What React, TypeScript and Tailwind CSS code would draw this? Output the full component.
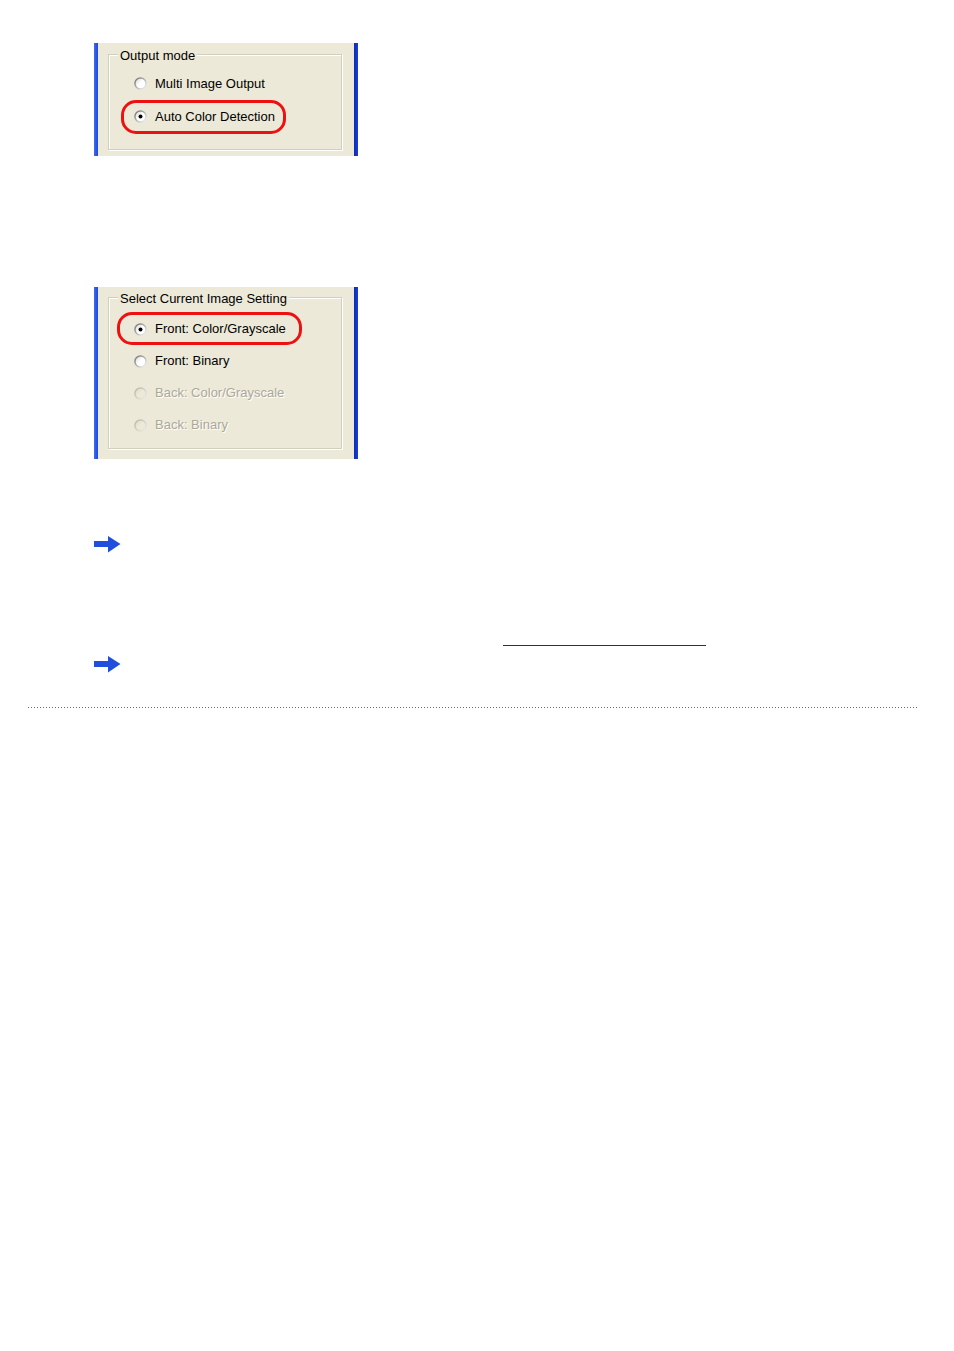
import React from "react";

const font = { fontFamily: '"Liberation Sans", Arial, sans-serif' };

function Radio({ checked, disabled, id }: { checked?: boolean; disabled?: boolean; id: string }) {
  return (
    <svg width="13" height="13" viewBox="0 0 13 13" className="shrink-0">
      <defs>
        <linearGradient id={`o${id}`} x1="0" y1="0" x2="1" y2="1">
          <stop offset="0" stopColor={disabled ? "#b4b2a4" : "#666666"} />
          <stop offset="0.5" stopColor={disabled ? "#d2d0c2" : "#b4b4b4"} />
          <stop offset="1" stopColor={disabled ? "#f4f2e8" : "#ffffff"} />
        </linearGradient>
        <linearGradient id={`i${id}`} x1="0" y1="0" x2="1" y2="1">
          <stop offset="0" stopColor={disabled ? "#dcd9c8" : "#d4d4d4"} />
          <stop offset="0.45" stopColor={disabled ? "#ece9d8" : "#ffffff"} />
          <stop offset="1" stopColor={disabled ? "#ece9d8" : "#ffffff"} />
        </linearGradient>
      </defs>
      <circle cx="6.5" cy="6.5" r="6.3" fill={`url(#o${id})`} />
      <circle cx="6.5" cy="6.5" r="4.8" fill={`url(#i${id})`} />
      {checked && <circle cx="6.5" cy="6.5" r="2" fill="#000" />}
    </svg>
  );
}

function Row({
  label,
  checked,
  disabled,
  id,
  h,
  oval,
}: {
  label: string;
  checked?: boolean;
  disabled?: boolean;
  id: string;
  h: string;
  oval?: React.ReactNode;
}) {
  return (
    <div className={`relative flex items-center gap-[8px] ${h}`}>
      <Radio checked={checked} disabled={disabled} id={id} />
      <span
        className={`text-[13px] leading-[16px] ${
          disabled ? "text-[#aca899] [text-shadow:1px_1px_0_#ffffff]" : "text-black"
        }`}
      >
        {label}
      </span>
      {oval}
    </div>
  );
}

function Panel({
  h,
  pt,
  fh,
  title,
  children,
}: {
  h: string;
  pt: string;
  fh: string;
  title: string;
  children: React.ReactNode;
}) {
  return (
    <div className={`flex w-[264px] ${h}`} style={font}>
      <div className="w-[4px] bg-[linear-gradient(to_right,#3a6af0,#1e4ad8)]" />
      <div className={`flex-1 bg-[#ece9d8] pl-[10px] ${pt}`}>
        <fieldset
          className={`w-[234px] ${fh} border border-[#d0d0bf] shadow-[1px_1px_0_#ffffff,inset_1px_1px_0_#ffffff]`}
        >
          <legend className="ml-[9px] bg-[#ece9d8] px-[2px] text-[13px] leading-[16px] text-black">
            <span className="relative top-[2px]">{title}</span>
          </legend>
          {children}
        </fieldset>
      </div>
      <div className="w-[4px] bg-[linear-gradient(to_right,#0a2cb8,#1a3fd0)]" />
    </div>
  );
}

function Arrow() {
  return (
    <svg width="27" height="17" viewBox="0 0 27 17" className="block">
      <rect x="0" y="5" width="15" height="6" fill="#1f4fdc" />
      <polygon points="14,0 26.5,8 14,16.5" fill="#1f4fdc" />
    </svg>
  );
}

export default function App() {
  return (
    <div className="min-h-[1351px] w-full bg-white">
      <div className="pl-[94px] pt-[43px]">
        <Panel h="h-[113px]" pt="pt-[3px]" fh="h-[104px]" title="Output mode">
          <div className="pl-[25px] pt-[5px]">
            <Row label="Multi Image Output" id="a" h="h-[33px]" />
            <Row
              label="Auto Color Detection"
              id="b"
              checked
              h="h-[33px]"
              oval={
                <div className="pointer-events-none absolute left-[-13px] top-[0px] h-[34px] w-[165px] rounded-[15px] border-[3px] border-[#ee1111]" />
              }
            />
          </div>
        </Panel>

        <div className="mt-[131px]">
          <Panel h="h-[172px]" pt="pt-[2px]" fh="h-[160px]" title="Select Current Image Setting">
            <div className="pl-[25px] pt-[8px]">
              <Row
                label="Front: Color/Grayscale"
                id="c"
                checked
                h="h-[32px]"
                oval={
                  <div className="pointer-events-none absolute left-[-17px] top-[-1px] h-[33px] w-[185px] rounded-[15px] border-[3px] border-[#ee1111]" />
                }
              />
              <Row label="Front: Binary" id="d" h="h-[32px]" />
              <Row label="Back: Color/Grayscale" id="e" disabled h="h-[32px]" />
              <Row label="Back: Binary" id="f" disabled h="h-[32px]" />
            </div>
          </Panel>
        </div>

        <div className="mt-[77px]">
          <Arrow />
        </div>

        <div className="ml-[409px] mt-[92px] h-px w-[203px] bg-[#333333]" />

        <div className="mt-[10px]">
          <Arrow />
        </div>
      </div>

      <div className="ml-[28px] mt-[34px] h-px w-[889px] bg-[linear-gradient(to_right,#6a6a6a_1px,transparent_1px)] bg-[length:3px_1px]" />
    </div>
  );
}
